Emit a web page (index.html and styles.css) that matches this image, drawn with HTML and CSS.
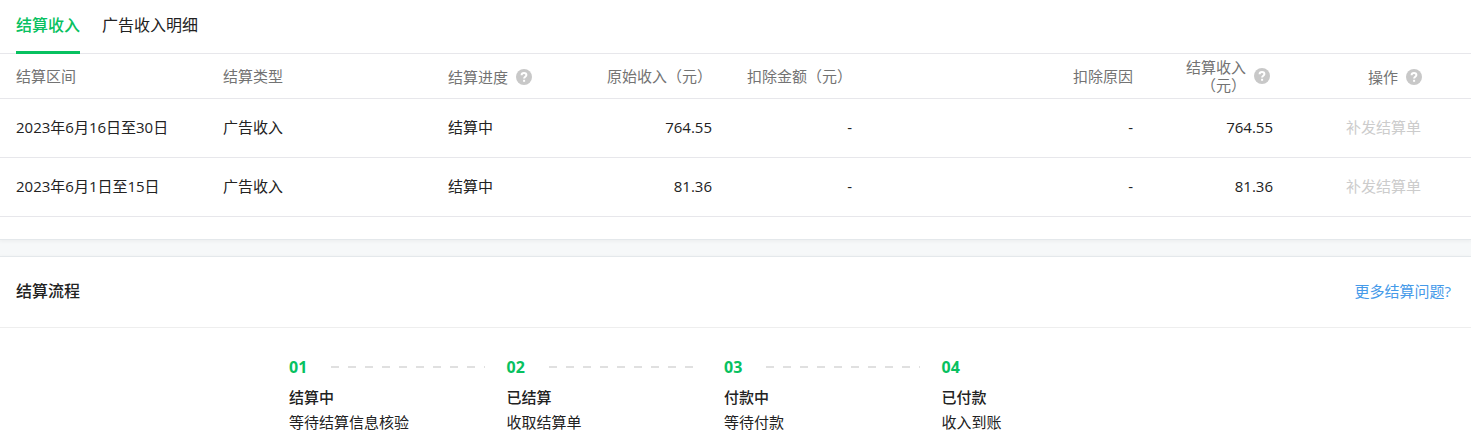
FILE: index.html
```html
<!DOCTYPE html>
<html lang="zh-CN">
<head>
	<meta charset="UTF-8">
	<meta name="viewport" content="width=device-width, initial-scale=1">
	<title>结算收入</title>
	<link rel="stylesheet" href="styles.css">
</head>
<body>
	<section class="card">
		<nav class="tabs">
			<a class="tab active" href="#income">结算收入</a>
			<a class="tab" href="#detail">广告收入明细</a>
		</nav>
		<table class="bills" id="income">
			<colgroup>
				<col class="c-range">
				<col class="c-type">
				<col class="c-num">
				<col class="c-origin">
				<col class="c-num">
				<col>
				<col class="c-num">
				<col class="c-action">
			</colgroup>
			<thead>
				<tr>
					<th>结算区间</th>
					<th>结算类型</th>
					<th>
						<span class="tip">结算进度
							<svg class="help" viewBox="0 0 16 16" aria-hidden="true"><circle cx="8" cy="8" r="8"/><path d="M5.6 6.3C5.6 4.9 6.6 4.1 8 4.1s2.4.8 2.4 2c0 1.7-2.3 1.7-2.3 3.5"/><rect x="7.1" y="10.8" width="2" height="2"/></svg>
						</span>
					</th>
					<th class="num">原始收入（元）</th>
					<th class="num">扣除金额（元）</th>
					<th class="num">扣除原因</th>
					<th class="num">
						<span class="tip"><span>结算收入<br>（元）</span>
							<svg class="help" viewBox="0 0 16 16" aria-hidden="true"><circle cx="8" cy="8" r="8"/><path d="M5.6 6.3C5.6 4.9 6.6 4.1 8 4.1s2.4.8 2.4 2c0 1.7-2.3 1.7-2.3 3.5"/><rect x="7.1" y="10.8" width="2" height="2"/></svg>
						</span>
					</th>
					<th class="num action">
						<span class="tip">操作
							<svg class="help" viewBox="0 0 16 16" aria-hidden="true"><circle cx="8" cy="8" r="8"/><path d="M5.6 6.3C5.6 4.9 6.6 4.1 8 4.1s2.4.8 2.4 2c0 1.7-2.3 1.7-2.3 3.5"/><rect x="7.1" y="10.8" width="2" height="2"/></svg>
						</span>
					</th>
				</tr>
			</thead>
			<tbody>
				<tr>
					<td>2023年6月16日至30日</td>
					<td>广告收入</td>
					<td>结算中</td>
					<td class="num">764.55</td>
					<td class="num">-</td>
					<td class="num">-</td>
					<td class="num">764.55</td>
					<td class="num action"><button type="button" disabled>补发结算单</button></td>
				</tr>
				<tr>
					<td>2023年6月1日至15日</td>
					<td>广告收入</td>
					<td>结算中</td>
					<td class="num">81.36</td>
					<td class="num">-</td>
					<td class="num">-</td>
					<td class="num">81.36</td>
					<td class="num action"><button type="button" disabled>补发结算单</button></td>
				</tr>
			</tbody>
		</table>
	</section>

	<section class="card process">
		<header class="card-head">
			<h2>结算流程</h2>
			<a href="#faq">更多结算问题?</a>
		</header>
		<ol class="steps">
			<li>
				<div class="step-no">01</div>
				<h3>结算中</h3>
				<p>等待结算信息核验</p>
			</li>
			<li>
				<div class="step-no">02</div>
				<h3>已结算</h3>
				<p>收取结算单</p>
			</li>
			<li>
				<div class="step-no">03</div>
				<h3>付款中</h3>
				<p>等待付款</p>
			</li>
			<li>
				<div class="step-no">04</div>
				<h3>已付款</h3>
				<p>收入到账</p>
			</li>
		</ol>
	</section>
</body>
</html>
```
FILE: styles.css
```css
* {
	margin: 0;
	padding: 0;
	box-sizing: border-box;
	}
body {
	font-family: "Open Sans", "Noto Sans CJK SC", sans-serif;
	font-size: 15px;
	line-height: 18px;
	color: #222;
	background: #f6f8f9;
	}
a {
	text-decoration: none;
	}
.card {
	background: #fff;
	padding-bottom: 22px;
	box-shadow: 0 0 0 1px #e4e8eb, 0 1px 4px 1px rgba(0, 0, 0, 0.05);
	}

/* tabs */
.tabs {
	display: flex;
	gap: 22px;
	height: 54px;
	padding: 0 16px;
	border-bottom: 1px solid #e7e7eb;
	}
.tab {
	height: 54px;
	font-size: 16px;
	line-height: 51px;
	color: #222;
	border-bottom: 3px solid transparent;
	}
.tab.active {
	font-weight: 500;
	color: #07c160;
	border-color: #07c160;
	}

/* bills */
.bills {
	width: 100%;
	table-layout: fixed;
	border-collapse: separate;
	border-spacing: 0;
	}
.c-range {
	width: 207px;
	}
.c-type {
	width: 225px;
	}
.c-num {
	width: 140px;
	}
.c-origin {
	width: 156px;
	}
.c-action {
	width: 182px;
	}
.bills th, .bills td {
	padding: 4px 16px;
	text-align: left;
	font-weight: normal;
	white-space: nowrap;
	border-bottom: 1px solid #e7e7eb;
	}
.bills th {
	height: 45px;
	color: #737373;
	}
.bills td {
	height: 59px;
	padding-bottom: 6px;
	}
.bills .num {
	text-align: right;
	}
.bills th.action {
	padding-right: 46px;
	}
.bills td.action {
	padding-right: 50px;
	}
.bills button {
	font: inherit;
	color: #ccc;
	background: none;
	border: 0;
	}
.tip {
	display: inline-flex;
	align-items: center;
	gap: 8px;
	padding-right: 3px;
	vertical-align: middle;
	}
.help {
	width: 16px;
	height: 16px;
	fill: #c8c8c8;
	}
.help path {
	fill: none;
	stroke: #fff;
	stroke-width: 2;
	}
.help rect {
	fill: #fff;
	}

/* process */
.process {
	margin-top: 18px;
	padding-bottom: 1px;
	}
.card-head {
	display: flex;
	justify-content: space-between;
	align-items: center;
	height: 71px;
	padding: 0 20px 2px 16px;
	border-bottom: 1px solid #eee;
	}
.card-head h2 {
	font-size: 16px;
	font-weight: 500;
	}
.card-head a {
	color: #459ae9;
	}
.steps {
	display: grid;
	grid-template-columns: repeat(4, 1fr);
	max-width: 893px;
	margin: 0 auto;
	padding: 27px 23px 0 0;
	list-style: none;
	}
.step-no {
	display: flex;
	align-items: center;
	gap: 24px;
	font-size: 16px;
	line-height: 24px;
	font-weight: bold;
	color: #07c160;
	}
li:not(:last-child) .step-no::after {
	content: "";
	flex: 1;
	height: 2px;
	margin-right: 22px;
	background: repeating-linear-gradient(90deg, #e0e0e0 0, #e0e0e0 8px, transparent 8px, transparent 17px);
	}
.steps h3 {
	margin-top: 5px;
	font-size: 15px;
	line-height: 26px;
	font-weight: 500;
	}
.steps p {
	line-height: 24px;
	}
```
